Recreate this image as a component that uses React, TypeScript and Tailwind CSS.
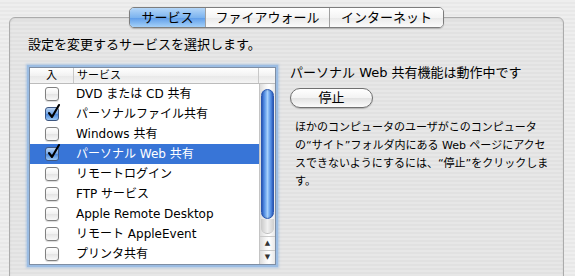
import React from "react";

const services = [
  { name: "DVD または CD 共有", on: false },
  { name: "パーソナルファイル共有", on: true },
  { name: "Windows 共有", on: false },
  { name: "パーソナル Web 共有", on: true, selected: true },
  { name: "リモートログイン", on: false },
  { name: "FTP サービス", on: false },
  { name: "Apple Remote Desktop", on: false },
  { name: "リモート AppleEvent", on: false },
  { name: "プリンタ共有", on: false },
];

const Checkbox = ({ checked }: { checked: boolean }) => (
  <span className="relative block w-[14px] h-[14px]">
    <span
      className={
        checked
          ? "block w-[14px] h-[14px] rounded-[3px] border border-[#3d5680] bg-[linear-gradient(#bcd6f5,#6fa3e6_50%,#4a87dc_51%,#9cc8f5)]"
          : "block w-[14px] h-[14px] rounded-[3px] border border-[#808080] bg-[linear-gradient(#ffffff,#f1f1f1_50%,#e4e4e4_51%,#f8f8f8)] shadow-[0_1px_1px_rgba(0,0,0,0.15)]"
      }
    />
    {checked && (
      <svg className="absolute -top-[4px] left-[1px]" width="15" height="17" viewBox="0 0 15 17">
        <path d="M3 10 L6 14 L13 2" stroke="#000" strokeWidth="2.1" fill="none" strokeLinecap="round" strokeLinejoin="round" />
      </svg>
    )}
  </span>
);

const ScrollBar = () => (
  <div className="w-[16px] flex flex-col border-l border-[#c4c4c4] bg-[linear-gradient(to_right,#dcdcdc,#f6f6f6_40%,#ffffff_60%,#e8e8e8)]">
    {/* thumb */}
    <div className="mx-[1px] mt-[5px] h-[130px] rounded-full border border-[#2a57b0] bg-[linear-gradient(to_right,#2f62c9,#5c97e8_25%,#a6d0fb_50%,#5c97e8_75%,#2f62c9)] shadow-[inset_0_0_2px_rgba(0,0,0,0.25)]" />
    {/* track end cap */}
    <div className="mx-[1px] h-[15px] rounded-b-full bg-[linear-gradient(to_right,#c9c9c9,#f0f0f0_50%,#cfcfcf)] border-b border-[#bdbdbd]" />
    <div className="flex-1" />
    <div className="h-[14px] flex items-center justify-center border-t border-[#c9c9c9] text-[7px] leading-none text-[#333]">▲</div>
    <div className="h-[14px] flex items-center justify-center border-t border-[#c9c9c9] text-[7px] leading-none text-[#333]">▼</div>
  </div>
);

const App = () => {
  return (
    <div className="w-[575px] h-[276px] overflow-hidden pt-[7px] text-black font-['DejaVu_Sans','Noto_Sans_CJK_JP',sans-serif] bg-[repeating-linear-gradient(to_bottom,#eeeeee_0px,#eeeeee_2px,#e8e8e8_2px,#e8e8e8_4px)]">
      <div className="ml-[9px] w-[555px]">
        {/* Tabs */}
        <div className="relative z-10 flex justify-center h-[21px]">
          <div className="flex rounded-[5px] border border-[#7d7d7d] overflow-hidden shadow-[0_1px_1px_rgba(0,0,0,0.2)] text-[13px] leading-[19px]">
            <div className="w-[75px] text-center bg-[linear-gradient(#b4d6f8,#7db4ef_50%,#5d9ce9_51%,#a4d0f8)]">サービス</div>
            <div className="w-[124px] text-center border-l border-[#a0a0a0] bg-[linear-gradient(#ffffff,#f4f4f4_50%,#e9e9e9_51%,#fbfbfb)]">ファイアウォール</div>
            <div className="w-[114px] text-center border-l border-[#a0a0a0] bg-[linear-gradient(#ffffff,#f4f4f4_50%,#e9e9e9_51%,#fbfbfb)]">インターネット</div>
          </div>
        </div>

        {/* Panel */}
        <div className="-mt-[11px] h-[280px] rounded-[6px] border border-[#ababab] bg-[repeating-linear-gradient(to_bottom,#e7e7e7_0px,#e7e7e7_2px,#e1e1e1_2px,#e1e1e1_4px)] shadow-[inset_0_1px_2px_rgba(0,0,0,0.08)]">
          <div className="pt-[19px] pl-[18px] text-[13px] leading-[16px]">設定を変更するサービスを選択します。</div>

          <div className="mt-[14px] ml-[19px] flex items-start">
            {/* Table */}
            <div className="w-[247px] border border-[#7f8ea3] bg-white shadow-[0_0_0_2px_#9cbde3,0_0_2px_3px_rgba(140,180,225,0.6)]">
              <div className="flex h-[16px] border-b border-[#bcbcbc] bg-[linear-gradient(#ffffff,#f2f2f2_50%,#e8e8e8_51%,#f4f4f4)] text-[11px] leading-[15px]">
                <div className="w-[44px] border-r border-[#c8c8c8] text-center">入</div>
                <div className="w-[185px] border-r border-[#c8c8c8] pl-[3px]">サービス</div>
                <div className="flex-1" />
              </div>
              <div className="flex h-[180px]">
                <div className="w-[229px]">
                  {services.map((s) => (
                    <div
                      key={s.name}
                      className={
                        s.selected
                          ? "flex items-center h-[20px] bg-[#3875d7] text-white"
                          : "flex items-center h-[20px]"
                      }
                    >
                      <div className="w-[44px] flex justify-center">
                        <Checkbox checked={s.on} />
                      </div>
                      <div className="pl-[2px] text-[12px] leading-[16px] whitespace-nowrap">{s.name}</div>
                    </div>
                  ))}
                </div>
                <ScrollBar />
              </div>
            </div>

            {/* Detail */}
            <div className="ml-[14px] -mt-[2px]">
              <div className="text-[13px] leading-[16px] whitespace-nowrap">パーソナル Web 共有機能は動作中です</div>
              <button className="mt-[7px] w-[83px] h-[20px] rounded-full border border-[#707070] bg-[linear-gradient(#ffffff,#f3f3f3_50%,#e2e2e2_51%,#fbfbfb)] shadow-[0_1px_1px_rgba(0,0,0,0.2)] text-[13px] leading-[18px] text-center">
                停止
              </button>
              <div className="mt-[10px] pl-[5px] text-[11px] leading-[18px] whitespace-nowrap">
                <div>ほかのコンピュータのユーザがこのコンピュータ</div>
                <div>の“サイト”フォルダ内にある Web ページにアクセ</div>
                <div>スできないようにするには、“停止”をクリックしま</div>
                <div>す。</div>
              </div>
            </div>
          </div>
        </div>
      </div>
    </div>
  );
};

export default App;
